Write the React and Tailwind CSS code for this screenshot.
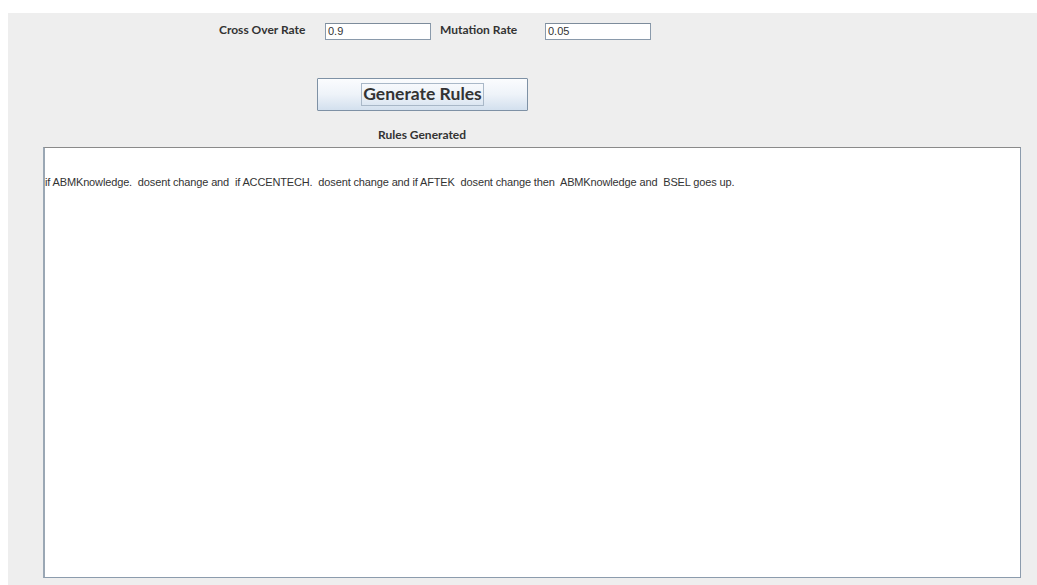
import React from "react";

const RULE =
  "if ABMKnowledge.  dosent change and  if ACCENTECH.  dosent change and if AFTEK  dosent change then  ABMKnowledge and  BSEL goes up.";

function RateField({ value }) {
  return (
    <div className="w-[106px] h-[17px] bg-white border border-[#8a9aab] border-t-[#7d8c9b] flex items-center pl-[2px] text-[11px] text-[#333] [font-family:'Liberation_Sans',Arial,sans-serif]">
      {value}
    </div>
  );
}

const label = "text-[12px] font-bold text-[#333] leading-[16px] [font-family:Lato,'DejaVu_Sans',sans-serif]";

export default function App() {
  return (
    <div className="w-[1037px] h-[585px] bg-white pl-[8px] pt-[13px] overflow-hidden">
      <div className="w-[1029px] h-[572px] bg-[#eeeeee]">
        {/* parameters row */}
        <div className="flex items-start pt-[10px] pl-[211px]">
          <div className={`${label} w-[106px] -mt-[1px]`}>Cross Over Rate</div>
          <RateField value="0.9" />
          <div className={`${label} ml-[9px] w-[105px] -mt-[1px]`}>Mutation Rate</div>
          <RateField value="0.05" />
        </div>

        {/* action */}
        <div className="pl-[309px] mt-[38px]">
          <button className="w-[211px] h-[33px] border border-[#7e91a5] bg-gradient-to-b from-[#fbfcfe] via-[#eef3f9] to-[#d3e0ee] flex items-center justify-center rounded-[1px]">
            <span className="border border-[#a9b8c8] px-[1px] h-[23px] flex items-center text-[17.5px] font-bold text-[#333] [font-family:Lato,'DejaVu_Sans',sans-serif]">
              Generate Rules
            </span>
          </button>
        </div>

        <div className={`${label} pl-[370px] mt-[16px] leading-[14px]`}>Rules Generated</div>

        {/* output area */}
        <div className="ml-[35px] mt-[4px] w-[978px] h-[431px] bg-white border border-[#8c9cad] border-t-[#8a8a8a] border-l-2 border-l-[#9aa7b4]">
          <div className="pt-[26px] text-[11px] text-[#333] whitespace-pre [font-family:'Liberation_Sans',Arial,sans-serif] tracking-[-0.14px]">
            {RULE}
          </div>
        </div>
      </div>
    </div>
  );
}
